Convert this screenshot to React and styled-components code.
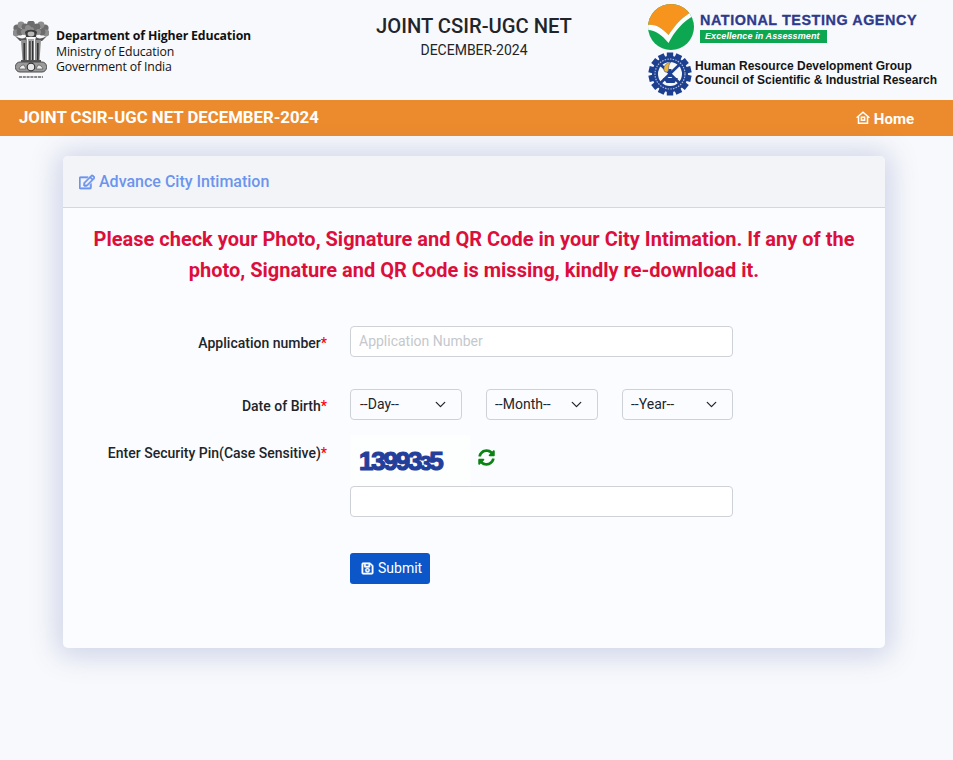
import React from "react";
import styled, { createGlobalStyle } from "styled-components";
import { FaRegEdit, FaSyncAlt, FaRegSave } from "react-icons/fa";
import { ChevronDown } from "lucide-react";

const Global = createGlobalStyle`
  html, body { margin: 0; padding: 0; background: #f8f9fc; }
  body { font-family: Roboto, "Liberation Sans", sans-serif; color: #212529; width: 953px; height: 760px; overflow: hidden; }
  * { box-sizing: border-box; }
`;

const Header = styled.header`
  height: 100px;
  display: grid;
  grid-template-columns: 332px 284px 1fr;
  background: #f8f9fc;
`;
const LeftBrand = styled.div`
  display: flex;
  align-items: flex-start;
  padding: 21px 0 0 13px;
  gap: 7px;
`;
const BrandText = styled.div`
  font-family: "Open Sans", sans-serif;
  font-size: 12.3px;
  line-height: 15.5px;
  color: #111;
  padding-top: 7px;
  letter-spacing: -0.15px;
  white-space: nowrap;
`;
const BrandStrong = styled.div`
  font-weight: 700;
`;
const CenterTitle = styled.div`
  text-align: center;
  padding-top: 15px;
`;
const ExamTitle = styled.div`
  font-size: 20.2px;
  line-height: 22px;
  font-weight: 500;
  color: #212529;
`;
const ExamSub = styled.div`
  font-size: 14px;
  line-height: 17px;
  margin-top: 5px;
  color: #212529;
`;
const RightBrand = styled.div`
  display: flex;
  flex-direction: column;
  padding: 4px 0 0 32px;
  gap: 2px;
`;
const LogoRow = styled.div`
  display: flex;
  align-items: ${(p) => p.$align || "flex-start"};
  gap: ${(p) => p.$gap || 6}px;
`;
const NtaText = styled.div`
  padding-top: 8px;
`;
const NtaName = styled.div`
  font-family: "Liberation Sans", sans-serif;
  font-weight: 700;
  font-size: 14.4px;
  line-height: 16px;
  letter-spacing: 0.55px;
  color: #2e3a8c;
  -webkit-text-stroke: 0.3px #2e3a8c;
  white-space: nowrap;
`;
const NtaTag = styled.div`
  margin-top: 2px;
  width: 127px;
  height: 13px;
  background: #0ca750;
  color: #fff;
  font-family: "Liberation Sans", sans-serif;
  font-size: 9px;
  line-height: 13px;
  font-style: italic;
  font-weight: 700;
  padding-left: 5px;
  letter-spacing: 0.1px;
  white-space: nowrap;
`;
const CsirText = styled.div`
  font-family: "Liberation Sans", sans-serif;
  font-weight: 700;
  font-size: 12px;
  line-height: 14px;
  color: #151515;
  white-space: nowrap;
  padding-bottom: 3px;
`;

const NavBar = styled.nav`
  height: 36px;
  background: #ec8b2d;
  display: flex;
  align-items: center;
  justify-content: space-between;
  padding: 0 39px 0 19px;
  color: #fff;
`;
const NavTitle = styled.div`
  font-size: 16.8px;
  font-weight: 700;
  color: #fff;
  padding-bottom: 2px;
`;
const NavLink = styled.a`
  display: flex;
  align-items: center;
  gap: 4px;
  font-size: 15px;
  font-weight: 700;
  color: #fff;
  padding-top: 2px;
  svg { margin-top: -3px; }
`;

const Main = styled.main`
  padding: 20px 68px 0 63px;
`;
const Card = styled.section`
  height: 492px;
  background: #fbfcff;
  border-radius: 5px;
  box-shadow: 0 2px 28px 6px rgba(58, 84, 160, 0.22);
  overflow: hidden;
`;
const CardHead = styled.div`
  height: 52px;
  background: #f3f4f7;
  border-bottom: 1px solid #d5d7db;
  display: flex;
  align-items: center;
  padding: 0 0 0 16px;
  gap: 4px;
  color: #6c94ee;
  font-size: 16px;
  font-weight: 500;
  svg { stroke: currentColor; stroke-width: 22; }
`;
const Notice = styled.h2`
  margin: 16px 0 0;
  padding: 0 20px;
  text-align: center;
  color: #dc0f3c;
  font-size: 20px;
  line-height: 31px;
  font-weight: 700;
`;
const Form = styled.form`
  margin-top: 40px;
  display: grid;
  grid-template-columns: 264px 383px;
  column-gap: 23px;
`;
const Label = styled.label`
  justify-self: end;
  font-size: 14px;
  font-weight: 500;
  line-height: 17px;
  color: #212529;
  white-space: nowrap;
  padding-top: ${(p) => p.$top || 0}px;
`;
const Req = styled.span`
  color: #f00;
`;
const Field = styled.div`
  margin-bottom: ${(p) => p.$bottom || 0}px;
`;
const TextInput = styled.input`
  display: block;
  width: 100%;
  height: 31px;
  padding: 0 8px 1px;
  border: 1px solid #ced1d6;
  border-radius: 4px;
  background: #fff;
  font: 14px Roboto, sans-serif;
  &::placeholder { color: #c4c8cd; opacity: 1; }
`;
const SelectRow = styled.div`
  display: grid;
  grid-template-columns: 112px 112px 111px;
  column-gap: 24px;
`;
const FakeSelect = styled.div`
  height: 31px;
  border: 1px solid #ced1d6;
  border-radius: 4px;
  background: #fbfcff;
  display: flex;
  align-items: center;
  justify-content: space-between;
  padding: 0 12px 1px ${(p) => p.$pad || 9}px;
  font-size: 14px;
  color: #212529;
`;
const CaptchaRow = styled.div`
  display: flex;
  align-items: flex-start;
  gap: 8px;
  height: 51px;
`;
const CaptchaBox = styled.div`
  width: 120px;
  height: 51px;
  background: #fdfefe;
  padding: 11px 0 0 9px;
  font-family: "Liberation Sans", sans-serif;
  font-weight: 700;
  font-size: 26px;
  line-height: 30px;
  letter-spacing: -2.2px;
  color: #233f9b;
  -webkit-text-stroke: 1.2px #233f9b;
  white-space: nowrap;
`;
const CaptchaSmall = styled.span`
  font-size: 20px;
`;
const Refresh = styled.span`
  display: block;
  margin-top: 14px;
  color: #0a8312;
  line-height: 0;
`;
const SubmitButton = styled.button`
  display: flex;
  align-items: center;
  gap: 4px;
  height: 31px;
  width: 80px;
  padding: 0 0 1px 11px;
  border: 0;
  border-radius: 3px;
  background: #0b57c9;
  color: #fff;
  font: 14px Roboto, sans-serif;
  svg { stroke: currentColor; stroke-width: 24; }
`;

const Emblem = () => {
  const mane = [
    [4, 7, 3.6], [8, 4, 3.4], [12, 6, 3.4], [3, 12, 3.4], [7, 11, 3.4], [11, 11, 3],
    [32, 7, 3.6], [28, 4, 3.4], [24, 6, 3.4], [33, 12, 3.4], [29, 11, 3.4], [25, 11, 3],
    [18, 3.5, 4], [15, 7, 3], [21, 7, 3], [18, 9, 3],
  ];
  return (
    <svg width="36" height="58" viewBox="0 0 36 58" aria-hidden="true">
      {mane.map(([x, y, r], i) => (
        <circle key={i} cx={x} cy={y} r={r} fill={i % 2 ? "#8d8d8d" : "#6c6c6c"} />
      ))}
      <path d="M12 11c2-3 10-3 12 0l-1 5H13z" fill="#3b3b3b" />
      <ellipse cx="18" cy="13" rx="3.4" ry="2.4" fill="#b9b9b9" />
      <path d="M2 15c5 3 9 3 11 1l1 4H7zM34 15c-5 3-9 3-11 1l-1 4h7z" fill="#565656" />
      <path d="M8 19h6v21H9.5zM22 19h6l-1.5 21H22z" fill="#8f8f8f" />
      <path d="M15 18h6v22h-6z" fill="#a9a9a9" />
      <path d="M10.5 22h1.6v18h-1.6zM16.2 20h1.4v20h-1.4zM19 20h1.4v20H19zM24 22h1.6v18H24z" fill="#333" />
      <rect x="8" y="39" width="20" height="2" fill="#555" />
      <rect x="2.5" y="41" width="31" height="10" rx="4.5" fill="#9a9a9a" stroke="#4c4c4c" />
      <circle cx="18" cy="46" r="3.8" fill="#e8e8e8" stroke="#333" strokeWidth="1.2" />
      <path d="M6 48c1-3 3-4 5-4l2 4zM23 48l2-4c2 0 4 1 5 4z" fill="#ececec" stroke="#555" strokeWidth=".7" />
      <path d="M6 56h24" stroke="#666" strokeWidth="1.6" strokeDasharray="3 .8" />
    </svg>
  );
};

const NtaLogo = () => (
  <svg width="46" height="46" viewBox="0 0 46 46" aria-hidden="true">
    <defs>
      <clipPath id="ntaDisc">
        <circle cx="23" cy="23" r="23" />
      </clipPath>
    </defs>
    <g clipPath="url(#ntaDisc)">
      <rect width="46" height="46" fill="#0ca750" />
      <path d="M-1 0H47V6C35 12 27 21 20.5 31 13 23 7 20-1 21Z" fill="#f7941e" />
      <path d="M-1 21C7 20 13 23 20.5 31 27 21 35 12 47 6V11C35 17 27 27 20.5 39 13 30 7 26-1 26Z" fill="#fbfcfe" />
    </g>
  </svg>
);

const CsirLogo = () => {
  const teeth = Array.from({ length: 14 }, (_, i) => (i * 360) / 14);
  return (
    <svg width="44" height="44" viewBox="0 0 44 44" aria-hidden="true">
      {teeth.map((a) => (
        <rect key={a} x="18.8" y="0.5" width="6.4" height="6" fill="#1d3f8f" transform={`rotate(${a} 22 22)`} />
      ))}
      <circle cx="22" cy="22" r="18" fill="#1d3f8f" />
      <circle cx="22" cy="22" r="15" fill="none" stroke="#aab8d8" strokeWidth="1.2" strokeDasharray="1.5 1.2" />
      <circle cx="22" cy="22" r="12" fill="#f7f8fa" />
      <path d="M12.5 31 31 13M13 13l18.5 18" stroke="#1d3f8f" strokeWidth="2.6" />
      <path d="M15 26h15l-3.5 5h-8z" fill="#1d3f8f" />
      <path d="M20.5 25V17h3v8z" fill="#1d3f8f" />
      <path d="M17 20c-3-4 0-9 6-10-3 3-2 6-3 10z" fill="#f2b632" stroke="#1d3f8f" strokeWidth=".5" />
    </svg>
  );
};

const HomeIcon = () => (
  <svg width="14" height="14" viewBox="0 0 14 14" fill="none" stroke="#fff" strokeWidth="1.5" aria-hidden="true">
    <path d="M0.6 6.8 7 1.2l6.4 5.6" />
    <path d="M2.5 5.6v6.7h9V5.6" />
    <rect x="5.4" y="6.2" width="3.2" height="3" />
  </svg>
);

export default function App() {
  return (
    <>
      <Global />
      <Header>
        <LeftBrand>
          <Emblem />
          <BrandText>
            <BrandStrong>Department of Higher Education</BrandStrong>
            <div>Ministry of Education</div>
            <div>Government of India</div>
          </BrandText>
        </LeftBrand>
        <CenterTitle>
          <ExamTitle>JOINT CSIR-UGC NET</ExamTitle>
          <ExamSub>DECEMBER-2024</ExamSub>
        </CenterTitle>
        <RightBrand>
          <LogoRow $gap={6}>
            <NtaLogo />
            <NtaText>
              <NtaName>NATIONAL TESTING AGENCY</NtaName>
              <NtaTag>Excellence in Assessment</NtaTag>
            </NtaText>
          </LogoRow>
          <LogoRow $gap={3} $align="center">
            <CsirLogo />
            <CsirText>
              <div>Human Resource Development Group</div>
              <div>Council of Scientific &amp; Industrial Research</div>
            </CsirText>
          </LogoRow>
        </RightBrand>
      </Header>
      <NavBar>
        <NavTitle>JOINT CSIR-UGC NET DECEMBER-2024</NavTitle>
        <NavLink>
          <HomeIcon />
          Home
        </NavLink>
      </NavBar>
      <Main>
        <Card>
          <CardHead>
            <FaRegEdit size={16} />
            Advance City Intimation
          </CardHead>
          <Notice>
            Please check your Photo, Signature and QR Code in your City Intimation. If any of the photo, Signature and QR Code is missing, kindly re-download it.
          </Notice>
          <Form>
            <Label $top={9}>
              Application number<Req>*</Req>
            </Label>
            <Field $bottom={32}>
              <TextInput placeholder="Application Number" />
            </Field>
            <Label $top={9}>
              Date of Birth<Req>*</Req>
            </Label>
            <Field $bottom={15}>
              <SelectRow>
                <FakeSelect>
                  --Day--
                  <ChevronDown size={17} strokeWidth={1.8} />
                </FakeSelect>
                <FakeSelect $pad={8}>
                  --Month--
                  <ChevronDown size={17} strokeWidth={1.8} />
                </FakeSelect>
                <FakeSelect $pad={8}>
                  --Year--
                  <ChevronDown size={17} strokeWidth={1.8} />
                </FakeSelect>
              </SelectRow>
            </Field>
            <Label $top={10}>
              Enter Security Pin(Case Sensitive)<Req>*</Req>
            </Label>
            <Field $bottom={36}>
              <CaptchaRow>
                <CaptchaBox>
                  13993<CaptchaSmall>3</CaptchaSmall>5
                </CaptchaBox>
                <Refresh>
                  <FaSyncAlt size={17} />
                </Refresh>
              </CaptchaRow>
              <TextInput />
            </Field>
            <span />
            <Field>
              <SubmitButton type="button">
                <FaRegSave size={13} />
                Submit
              </SubmitButton>
            </Field>
          </Form>
        </Card>
      </Main>
    </>
  );
}
